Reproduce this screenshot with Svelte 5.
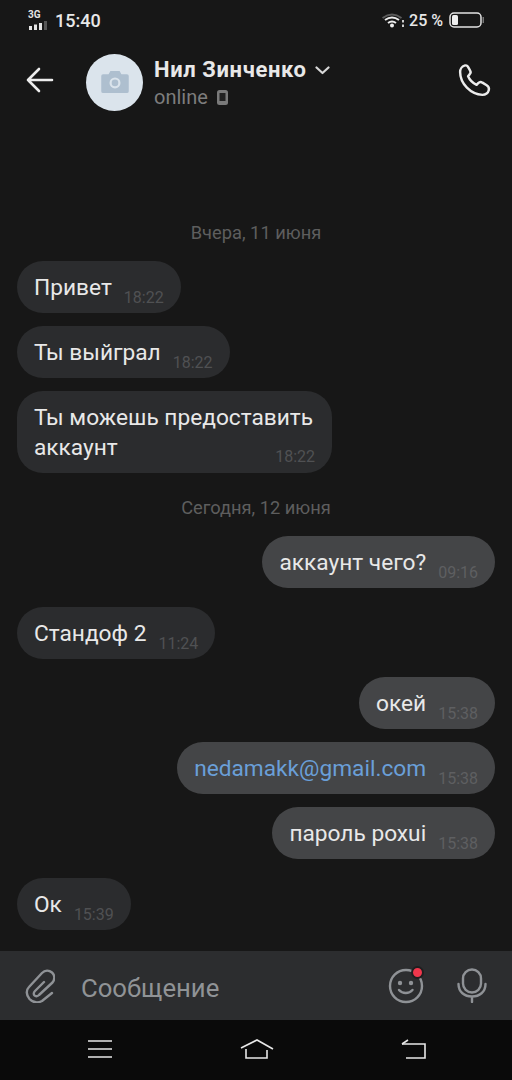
<script>
    const messages = [
        { type: 'date', text: 'Вчера, 11 июня', first: true },
        { type: 'in', text: 'Привет', time: '18:22' },
        { type: 'in', text: 'Ты выйграл', time: '18:22' },
        { type: 'in', lines: ['Ты можешь предоставить', 'аккаунт'], time: '18:22' },
        { type: 'date', text: 'Сегодня, 12 июня' },
        { type: 'out', text: 'аккаунт чего?', time: '09:16' },
        { type: 'in', text: 'Стандоф 2', time: '11:24', apart: true },
        { type: 'out', text: 'окей', time: '15:38', apart: true },
        { type: 'out', text: 'nedamakk@gmail.com', time: '15:38', link: true },
        { type: 'out', text: 'пароль poxui', time: '15:38' },
        { type: 'in', text: 'Ок', time: '15:39', apart: true }
    ];
</script>

<div class="screen">
    <div class="status-bar">
        <div class="status-left">
            <div class="signal">
                <span class="net">3G</span>
                <svg width="20" height="9" viewBox="0 0 20 9">
                    <rect x="1" y="5" width="3" height="4" fill="#e4e4e4" />
                    <rect x="6" y="3.500" width="3" height="5.500" fill="#e4e4e4" />
                    <rect x="11" y="2" width="3" height="7" fill="#e4e4e4" />
                    <rect x="16" y="0" width="3" height="9" fill="#555" />
                </svg>
            </div>
            <span class="clock">15:40</span>
        </div>
        <div class="status-right">
            <svg class="wifi" width="22" height="15" viewBox="0 0 22 15" fill="none">
                <path d="M0.500 5 Q10 -2 19.500 5" stroke="#5c5c5c" stroke-width="2" />
                <path d="M3 7 Q10 2 17 7" stroke="#eee" stroke-width="2" />
                <path d="M6 10 Q10 7 14 10" stroke="#eee" stroke-width="2" />
                <circle cx="10" cy="12.500" r="2" fill="#eee" />
                <rect x="20" y="7" width="2" height="2.500" fill="#ccc" />
                <rect x="20" y="11.500" width="2" height="2.500" fill="#ccc" />
            </svg>
            <span class="percent">25 %</span>
            <svg width="36" height="16" viewBox="0 0 36 16" fill="none">
                <rect x="1" y="1" width="31" height="14" rx="4" stroke="#e4e4e4" stroke-width="1.500" />
                <rect x="3" y="3" width="6" height="10" rx="1.500" fill="#eee" />
                <rect x="33.500" y="5" width="1.500" height="6" fill="#777" />
            </svg>
        </div>
    </div>

    <header class="top-bar">
        <svg class="back" width="28" height="26" viewBox="0 0 28 26" fill="none" stroke="#ececec" stroke-width="2.600" stroke-linecap="round" stroke-linejoin="round">
            <path d="M26 13H2M13 2 2 13l11 11" />
        </svg>
        <div class="avatar">
            <svg width="28" height="22" viewBox="0 0 30 24">
                <path d="M2 3.500h6l2-3.500h10l2 3.500h6a2 2 0 0 1 2 2V22a2 2 0 0 1-2 2H2a2 2 0 0 1-2-2V5.500a2 2 0 0 1 2-2z" fill="#aebfcf" />
                <circle cx="15" cy="13" r="6" fill="#dbe4ec" />
                <circle cx="15" cy="13" r="3.600" fill="#aebfcf" />
            </svg>
        </div>
        <div class="contact">
            <div class="name-row">
                <span class="name">Нил Зинченко</span>
                <svg width="15" height="9" viewBox="0 0 15 9" fill="none" stroke="#d8d8d8" stroke-width="2.200" stroke-linecap="round" stroke-linejoin="round">
                    <path d="M1.500 1.500 7.500 7l6-5.500" />
                </svg>
            </div>
            <div class="presence">
                <span>online</span>
                <svg width="11" height="15" viewBox="0 0 11 15">
                    <rect x="0" y="0" width="11" height="15" rx="2.500" fill="#7a7a7a" />
                    <rect x="2.500" y="3" width="6" height="8" fill="#222" />
                </svg>
            </div>
        </div>
        <svg class="call" width="34" height="34" viewBox="0 0 32 32" fill="none" stroke="#ececec" stroke-width="2.300" stroke-linejoin="round">
            <path d="M6 2.500c-2 .5-4 3-4 6 0 11 10 21 21 21.500 3 0 5.500-2 6-4.500.5-2-.5-3.500-2-4.500l-4-2.500c-1.500-1-3-.5-4 .5l-1.500 1.500c-3.500-1.500-6.500-4.500-8-8l1.500-2c1-1 1-2.500.3-3.500l-2-3.500C9 2.800 7.500 2 6 2.500z" />
        </svg>
    </header>

    <main class="chat">
        {#each messages as m}
            {#if m.type === 'date'}
                <div class="date" class:first={m.first}>{m.text}</div>
            {:else if m.lines}
                <div class="bubble multi {m.type}">
                    <span class="text">{m.lines[0]}</span>
                    <div class="last-line">
                        <span class="text">{m.lines[1]}</span>
                        <span class="time">{m.time}</span>
                    </div>
                </div>
            {:else}
                <div class="bubble {m.type}" class:apart={m.apart}>
                    <span class="text" class:link={m.link}>{m.text}</span>
                    <span class="time">{m.time}</span>
                </div>
            {/if}
        {/each}
    </main>

    <div class="composer">
        <svg class="clip" width="30" height="34" viewBox="0 0 30 34" fill="none" stroke="#8f9296" stroke-width="2.400" stroke-linecap="round" stroke-linejoin="round">
            <path d="M27 24l-10 8c-4 2-9 1.500-12.500-2-3.500-4-3.500-9-.5-12L17 4c3-3 7-3 10-.5s3 7 .5 10L14 26c-1.500 1.500-3.500 1.500-4.500.5s-1-3 .5-4.500L19 13" />
        </svg>
        <span class="placeholder">Сообщение</span>
        <div class="smile">
            <svg width="36" height="36" viewBox="0 0 36 36" fill="none">
                <circle cx="18" cy="18" r="16" stroke="#8f9296" stroke-width="2.400" />
                <circle cx="12" cy="15" r="2.200" fill="#8f9296" />
                <circle cx="23" cy="15" r="2.200" fill="#8f9296" />
                <path d="M11 22c3.500 4 10 4 13.500 0" stroke="#8f9296" stroke-width="2.400" stroke-linecap="round" />
            </svg>
            <span class="dot"></span>
        </div>
        <svg class="mic" width="30" height="35" viewBox="0 0 30 35" fill="none" stroke="#8f9296" stroke-width="2.400" stroke-linecap="round">
            <rect x="6" y="1.500" width="18" height="23" rx="9" />
            <path d="M1.500 16c0 8 6 12.500 13.500 12.500S28.500 24 28.500 16M15 29v5" />
        </svg>
    </div>

    <nav class="nav-bar">
        <svg width="24" height="18" viewBox="0 0 24 18" fill="none" stroke="#e8e8e8" stroke-width="1.600">
            <path d="M0 1h24M0 9h24M0 17h24" />
        </svg>
        <svg width="34" height="20" viewBox="0 0 34 20" fill="none" stroke="#e8e8e8" stroke-width="1.600">
            <path d="M1 9 17 1l16 9M6 10v9h21v-8" />
        </svg>
        <svg width="25" height="20" viewBox="0 0 25 20" fill="none" stroke="#e8e8e8" stroke-width="1.600">
            <path d="M1 5h23v14H5" />
            <path d="M1 5l6-4" />
        </svg>
    </nav>
</div>

<style>
    :global(body)
    {
        margin: 0;
        background: #171717;
    }

    .screen
    {
        width: 512px;
        height: 1080px;
        display: flex;
        flex-direction: column;
        background: #171717;
        color: #e8e8e8;
        font-family: Roboto, "Liberation Sans", sans-serif;
        overflow: hidden;
    }

    .status-bar
    {
        height: 40px;
        padding: 0 27px 0 28px;
        display: flex;
        justify-content: space-between;
        align-items: center;
        flex-shrink: 0;
    }

    .status-left, .status-right
    {
        display: flex;
        align-items: center;
    }

    .signal
    {
        width: 27px;
        display: flex;
        flex-direction: column;
        line-height: 1;
    }

    .net
    {
        font-size: 10px;
        font-weight: 700;
        color: #e4e4e4;
    }

    .signal svg
    {
        margin-top: 1px;
    }

    .clock
    {
        font-size: 18px;
        font-weight: 500;
    }

    .wifi
    {
        margin-right: 5px;
    }

    .percent
    {
        font-size: 16px;
        font-weight: 500;
        margin-right: 6px;
    }

    .top-bar
    {
        height: 84px;
        padding: 0 20px 0 26px;
        display: flex;
        align-items: center;
        flex-shrink: 0;
    }

    .back
    {
        margin-bottom: 5px;
    }

    .call
    {
        margin-bottom: 4px;
    }

    .avatar
    {
        width: 57px;
        height: 57px;
        margin-left: 32px;
        border-radius: 50%;
        background: #dbe4ec;
        display: flex;
        align-items: center;
        justify-content: center;
        flex-shrink: 0;
    }

    .contact
    {
        margin: 2px 0 0 11px;
        flex: 1;
    }

    .name-row
    {
        display: flex;
        align-items: center;
        gap: 9px;
    }

    .name
    {
        font-size: 22px;
        font-weight: 700;
        line-height: 28px;
        letter-spacing: 0.6px;
    }

    .presence
    {
        display: flex;
        align-items: center;
        gap: 9px;
        font-size: 20px;
        line-height: 26px;
        color: #7d7d7d;
    }

    .chat
    {
        flex: 1;
        min-height: 0;
        display: flex;
        flex-direction: column;
        padding: 0 17px;
    }

    .date
    {
        text-align: center;
        font-size: 18.300px;
        line-height: 20px;
        color: #5e5e5e;
        margin: 12px 0 18px;
    }

    .date.first
    {
        margin: 99px 0 18px;
    }

    .bubble
    {
        min-height: 52px;
        box-sizing: border-box;
        padding: 12px 17px 0 17px;
        border-radius: 26px;
        display: flex;
        flex-shrink: 0;
        margin-bottom: 13px;
        font-size: 22.700px;
        line-height: 30px;
    }

    .bubble.apart
    {
        margin-top: 6px;
    }

    .bubble.in
    {
        align-self: flex-start;
        background: #2b2c2e;
    }

    .bubble.out
    {
        align-self: flex-end;
        background: #444547;
    }

    .bubble.out.apart
    {
        margin-top: 5px;
    }

    .bubble.multi
    {
        width: 315px;
        height: 82px;
        flex-direction: column;
    }

    .last-line
    {
        display: flex;
        justify-content: space-between;
    }

    .text.link
    {
        color: #6a9fd8;
    }

    .time
    {
        margin: 13px 0 0 12px;
        font-size: 16px;
        line-height: 24px;
        color: #505153;
    }

    .last-line .time
    {
        margin-top: 12px;
    }

    .bubble.out .time
    {
        color: #5e5f61;
    }

    .composer
    {
        height: 69px;
        padding: 0 25px;
        background: #2c2d2f;
        display: flex;
        align-items: center;
        flex-shrink: 0;
        box-sizing: border-box;
    }

    .placeholder
    {
        flex: 1;
        margin: 5px 0 0 26px;
        font-size: 25.700px;
        color: #909396;
    }

    .smile
    {
        position: relative;
        width: 36px;
        height: 36px;
    }

    .dot
    {
        position: absolute;
        top: -2px;
        right: 0;
        width: 9px;
        height: 9px;
        border: 2px solid #1f1f20;
        border-radius: 50%;
        background: #f0374c;
    }

    .mic
    {
        margin-left: 33px;
    }

    .nav-bar
    {
        height: 60px;
        padding: 0 86px 2px 88px;
        background: #0a0a0a;
        display: flex;
        align-items: center;
        justify-content: space-between;
        flex-shrink: 0;
        box-sizing: border-box;
    }
</style>
